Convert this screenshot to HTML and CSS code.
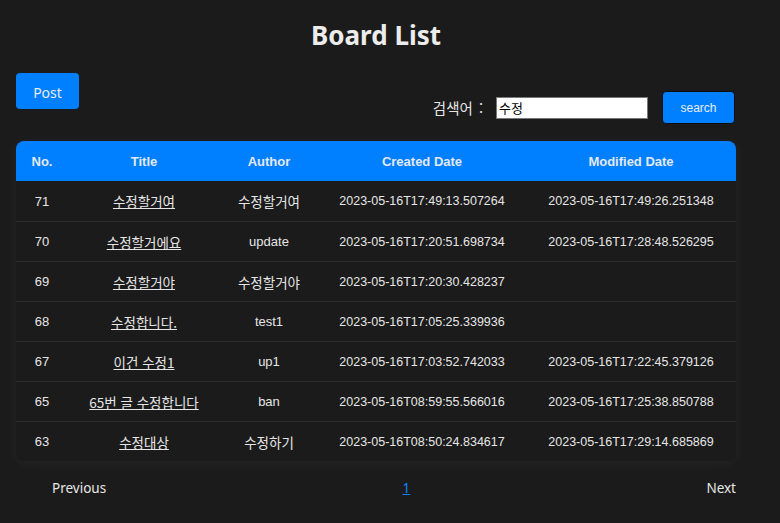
FILE: index.html
```html
<!DOCTYPE html>
<html lang="ko">
<head>
<meta charset="utf-8">
<title>Board List</title>
<link rel="stylesheet" href="styles.css">
</head>
<body>
<div class="container">
  <h1 class="title">Board List</h1>
  <div class="toolbar">
    <button class="btn post-btn">Post</button>
    <form class="search">
      <label class="search-label">검색어 :</label>
      <input class="search-input" type="text" value="수정">
      <button class="btn search-btn" type="button">search</button>
    </form>
  </div>
  <table class="board">
    <colgroup>
      <col class="c-no"><col class="c-title"><col class="c-author"><col class="c-created"><col class="c-modified">
    </colgroup>
    <thead>
      <tr><th>No.</th><th>Title</th><th>Author</th><th>Created Date</th><th>Modified Date</th></tr>
    </thead>
    <tbody>
      <tr><td>71</td><td><a href="#">수정할거여</a></td><td class="ko">수정할거여</td><td class="date">2023-05-16T17:49:13.507264</td><td class="date">2023-05-16T17:49:26.251348</td></tr>
      <tr><td>70</td><td><a href="#">수정할거에요</a></td><td>update</td><td class="date">2023-05-16T17:20:51.698734</td><td class="date">2023-05-16T17:28:48.526295</td></tr>
      <tr><td>69</td><td><a href="#">수정할거야</a></td><td class="ko">수정할거야</td><td class="date">2023-05-16T17:20:30.428237</td><td class="date"></td></tr>
      <tr><td>68</td><td><a href="#">수정합니다.</a></td><td>test1</td><td class="date">2023-05-16T17:05:25.339936</td><td class="date"></td></tr>
      <tr><td>67</td><td><a href="#">이건 수정1</a></td><td>up1</td><td class="date">2023-05-16T17:03:52.742033</td><td class="date">2023-05-16T17:22:45.379126</td></tr>
      <tr><td>65</td><td><a href="#">65번 글 수정합니다</a></td><td>ban</td><td class="date">2023-05-16T08:59:55.566016</td><td class="date">2023-05-16T17:25:38.850788</td></tr>
      <tr><td>63</td><td><a href="#">수정대상</a></td><td class="ko">수정하기</td><td class="date">2023-05-16T08:50:24.834617</td><td class="date">2023-05-16T17:29:14.685869</td></tr>
    </tbody>
  </table>
  <div class="pagination">
    <span class="page-nav">Previous</span>
    <a class="page-num" href="#">1</a>
    <span class="page-nav">Next</span>
  </div>
</div>
</body>
</html>
```
FILE: styles.css
```css
* { box-sizing: border-box; }
html, body {
  margin: 0;
  background: #1b1b1b;
}
body {
  font-family: "Noto Sans", "Noto Sans CJK KR", sans-serif;
  color: #e6e6e6;
}
.container {
  width: 720px;
  margin-left: 16px;
  padding-top: 17px;
}
.title {
  margin: 0;
  text-align: center;
  font-size: 26px;
  font-weight: 700;
  line-height: 36px;
  color: #ececec;
}
.toolbar {
  display: flex;
  justify-content: space-between;
  align-items: flex-start;
  margin-top: 20px;
}
.btn {
  border: none;
  background: #0080ff;
  color: #e8ecf4;
  border-radius: 4px;
  cursor: pointer;
}
.post-btn {
  width: 63px;
  height: 36px;
  font-family: "Noto Sans", sans-serif;
  font-size: 14px;
  padding: 3px 0 0;
}
.search {
  display: flex;
  align-items: center;
  margin: 18px 1px 0 0;
}
.search-label {
  font-family: "Noto Sans CJK KR", sans-serif;
  font-size: 14.5px;
  color: #e6e6e6;
  margin-right: 13px;
  word-spacing: 2px;
}
.search-input {
  width: 152px;
  height: 22px;
  border: 1px solid #777;
  background: #fff;
  color: #000;
  font-family: "Noto Sans CJK KR", sans-serif;
  font-size: 13px;
  padding: 0 2px;
  margin: 0;
  outline: none;
}
.search-btn {
  margin-left: 14px;
  width: 73px;
  height: 33px;
  font-family: "Liberation Sans", Arial, sans-serif;
  font-size: 12px;
  border: 1px solid #0d0d0d;
  padding: 0;
}
.board {
  width: 720px;
  margin-top: 17px;
  border-collapse: separate;
  border-spacing: 0;
  table-layout: fixed;
  border-radius: 8px;
  overflow: hidden;
  box-shadow: 0 2px 14px rgba(255, 255, 255, 0.05);
  background: #1b1b1b;
}
.c-no { width: 52px; }
.c-title { width: 152px; }
.c-author { width: 98px; }
.c-created { width: 208px; }
.c-modified { width: 210px; }
.board th {
  background: #0080ff;
  color: #e4e8f0;
  height: 40px;
  padding: 0;
  font-family: "Liberation Sans", Arial, sans-serif;
  font-size: 13px;
  font-weight: 700;
  text-align: center;
}
.board td {
  height: 40px;
  padding: 0;
  text-align: center;
  font-family: "Liberation Sans", "Noto Sans CJK KR", sans-serif;
  font-size: 13px;
  color: #e6e6e6;
  border-top: 1px solid #2e2e2e;
  white-space: nowrap;
}
.board td.date { font-size: 12.5px; }
.board tbody tr:first-child td { border-top: none; }
.board td a,
.board td.ko {
  font-family: "Noto Sans CJK KR", sans-serif;
  font-size: 13.5px;
}
.board td a {
  color: #e6e6e6;
  text-decoration: underline;
}
.pagination {
  display: flex;
  justify-content: space-between;
  align-items: center;
  padding-left: 36px;
  margin-top: 18px;
  font-family: "Noto Sans", sans-serif;
  font-size: 13.5px;
  color: #e6e6e6;
}
.page-num {
  color: #0a84ff;
  text-decoration: underline;
}
```
